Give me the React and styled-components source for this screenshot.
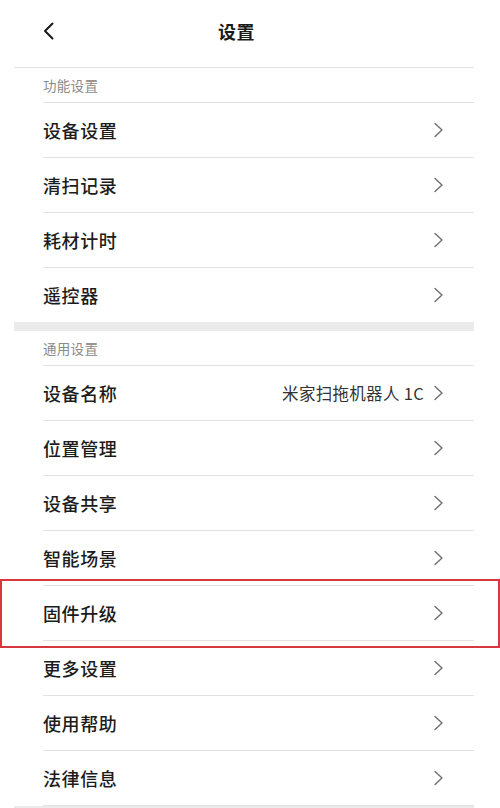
import React from "react";
import styled, { createGlobalStyle } from "styled-components";

const Global = createGlobalStyle`
  html, body { margin: 0; padding: 0; background: #fff; }
  body { font-family: "Noto Sans CJK SC", "Noto Sans", sans-serif; }
  * { box-sizing: border-box; }
`;

const Page = styled.div`
  width: 500px;
  height: 808px;
  overflow: hidden;
  background: #fff;
`;

const Header = styled.header`
  height: 67px;
  display: flex;
  align-items: center;
  padding: 0 0 5px 40px;
`;

const BackButton = styled.div`
  width: 16px;
  height: 18px;
  display: flex;
  align-items: center;
  justify-content: center;
`;

const Title = styled.h1`
  margin: 0 0 0 162px;
  font-size: 18px;
  line-height: 24px;
  font-weight: 700;
  color: #1a1a1a;
  letter-spacing: 0.5px;
`;

const Content = styled.div`
  margin: 0 26px 0 14px;
  border-top: 1px solid #e2e2e2;
`;

const Section = styled.section`
  display: flex;
  flex-direction: column;
`;

const SectionLabel = styled.div`
  height: 35px;
  margin-left: 29px;
  padding-bottom: 1px;
  border-bottom: 1px solid #e2e2e2;
  display: flex;
  align-items: center;
  font-size: 13.5px;
  color: #8a8a8a;
  letter-spacing: 0.3px;
`;

const Row = styled.div`
  position: relative;
  height: ${(p) => (p.$last ? "54px" : "55px")};
  margin-left: 29px;
  padding: 0 30px 1px 0;
  border-bottom: ${(p) => (p.$last ? "none" : "1px solid #e2e2e2")};
  display: flex;
  align-items: center;
  justify-content: space-between;

  ${(p) =>
    p.$highlight &&
    `
    &::after {
      content: "";
      position: absolute;
      top: -7px;
      bottom: -8px;
      left: -43px;
      right: -26px;
      border: 2px solid #d8373d;
      pointer-events: none;
    }
  `}
`;

const RowLabel = styled.span`
  font-size: 18px;
  font-weight: 500;
  color: #1c1c1c;
  letter-spacing: 0.6px;
`;

const RowRight = styled.div`
  display: flex;
  align-items: center;
  gap: 9px;
`;

const RowValue = styled.span`
  font-size: 16.5px;
  color: #333;
  letter-spacing: 0.3px;
`;

const Divider = styled.div`
  height: 9px;
  background: #ebebeb;
`;

const BottomBar = styled.div`
  height: 9px;
  background: #ebebeb;
`;

const Chevron = () => (
  <svg width="11" height="16" viewBox="0 0 11 16">
    <polyline
      points="2,1.5 9,8 2,14.5"
      fill="none"
      stroke="#6e6e6e"
      strokeWidth="1.4"
      strokeLinecap="round"
      strokeLinejoin="round"
    />
  </svg>
);

const BackIcon = () => (
  <svg width="13" height="18" viewBox="0 0 13 18">
    <polyline
      points="10.5,1.5 3,9 10.5,16.5"
      fill="none"
      stroke="#1a1a1a"
      strokeWidth="2"
      strokeLinecap="round"
      strokeLinejoin="round"
    />
  </svg>
);

const sections = [
  {
    label: "功能设置",
    items: [{ name: "设备设置" }, { name: "清扫记录" }, { name: "耗材计时" }, { name: "遥控器" }],
  },
  {
    label: "通用设置",
    items: [
      { name: "设备名称", value: "米家扫拖机器人 1C" },
      { name: "位置管理" },
      { name: "设备共享" },
      { name: "智能场景" },
      { name: "固件升级", highlight: true },
      { name: "更多设置" },
      { name: "使用帮助" },
      { name: "法律信息" },
    ],
  },
];

export default function App() {
  return (
    <Page>
      <Global />
      <Header>
        <BackButton>
          <BackIcon />
        </BackButton>
        <Title>设置</Title>
      </Header>
      <Content>
        {sections.map((s, si) => (
          <React.Fragment key={s.label}>
            {si > 0 && <Divider />}
            <Section>
              <SectionLabel>{s.label}</SectionLabel>
              {s.items.map((it, i) => (
                <Row
                  key={it.name}
                  $highlight={it.highlight}
                  $last={si === 0 && i === s.items.length - 1}
                >
                  <RowLabel>{it.name}</RowLabel>
                  <RowRight>
                    {it.value && <RowValue>{it.value}</RowValue>}
                    <Chevron />
                  </RowRight>
                </Row>
              ))}
            </Section>
          </React.Fragment>
        ))}
        <BottomBar />
      </Content>
    </Page>
  );
}
